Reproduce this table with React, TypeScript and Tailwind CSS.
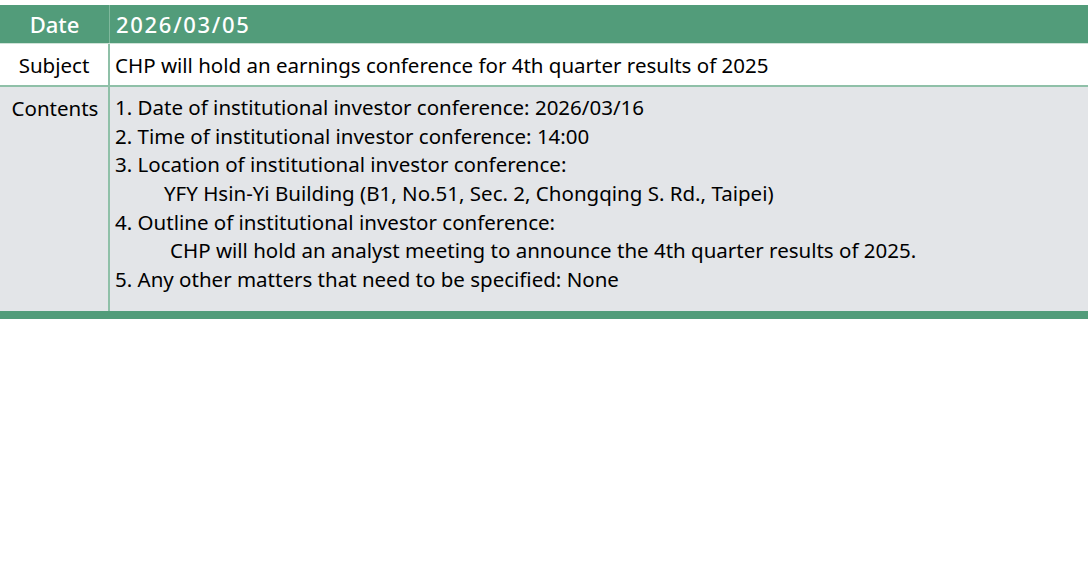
import React from 'react';

type Row = { label: string; lines: { text: string; indent?: string }[] };

const contents: Row = {
  label: 'Contents',
  lines: [
    { text: '1. Date of institutional investor conference: 2026/03/16' },
    { text: '2. Time of institutional investor conference: 14:00' },
    { text: '3. Location of institutional investor conference:' },
    { text: 'YFY Hsin-Yi Building (B1, No.51, Sec. 2, Chongqing S. Rd., Taipei)', indent: 'pl-[49px]' },
    { text: '4. Outline of institutional investor conference:' },
    { text: 'CHP will hold an analyst meeting to announce the 4th quarter results of 2025.', indent: 'pl-[55px]' },
    { text: '5. Any other matters that need to be specified: None' },
  ],
};

const App = () => {
  return (
    <div className="w-[1088px] h-[584px] bg-white pt-[5px] text-[20.5px] text-black" style={{ fontFamily: '"Noto Sans", "Open Sans", sans-serif' }}>
      {/* header */}
      <div className="flex h-[39px] bg-[#529c7a] text-white text-[22px] font-medium border-b border-[#cfe3d8]">
        <div className="w-[110px] shrink-0 flex items-center justify-center border-r border-[#7fb89c]">Date</div>
        <div className="flex items-center pl-[6px] tracking-[1.7px]">2026/03/05</div>
      </div>

      {/* subject */}
      <div className="flex h-[43px] bg-white border-b-2 border-[#8fc0a8]">
        <div className="w-[110px] shrink-0 flex items-center justify-center pt-[2px] border-r-2 border-[#8fc0a8]">Subject</div>
        <div className="flex items-center pl-[5px] pt-[2px]">CHP will hold an earnings conference for 4th quarter results of 2025</div>
      </div>

      {/* contents */}
      <div className="flex h-[224px] bg-[#e3e5e8]">
        <div className="w-[110px] shrink-0 flex justify-center pt-[6px] pl-[2px] border-r-2 border-[#8fc0a8]">{contents.label}</div>
        <div className="flex flex-col pl-[5px] pt-[6px]">
          {contents.lines.map((l, i) => (
            <div key={i} className={`h-[28.7px] leading-[28.7px] whitespace-nowrap ${l.indent ?? ''}`}>{l.text}</div>
          ))}
        </div>
      </div>

      <div className="h-[8px] bg-[#529c7a]" />
    </div>
  );
};

export default App;
